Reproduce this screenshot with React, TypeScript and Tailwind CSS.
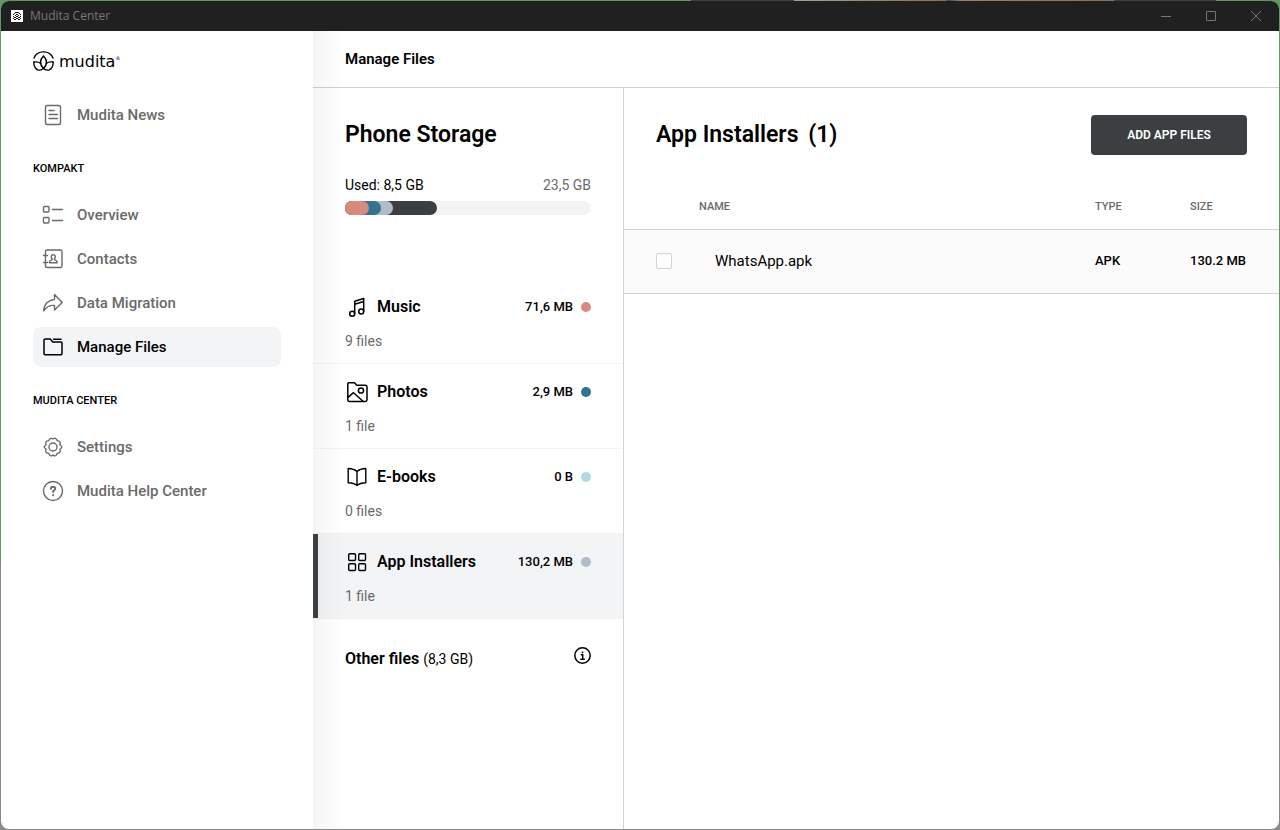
import type { ReactNode } from "react";

type IconProps = { children: ReactNode; className?: string; width?: number };

function Icon({ children, className = "", width = 1.4 }: IconProps) {
  return (
    <svg
      viewBox="0 0 24 24"
      fill="none"
      stroke="currentColor"
      strokeWidth={width}
      strokeLinecap="round"
      strokeLinejoin="round"
      aria-hidden="true"
      className={`size-6 shrink-0 ${className}`}
    >
      {children}
    </svg>
  );
}

const icons = {
  news: (
    <Icon>
      <rect x="4.5" y="2.5" width="15" height="19" rx="1.8" />
      <path d="M8 7.500h5M8 11.500h8.500M8 15.500h8.500" />
    </Icon>
  ),
  overview: (
    <Icon>
      <rect x="2.5" y="3.5" width="5.5" height="5.5" rx="1" />
      <rect x="2.5" y="14.5" width="5.5" height="5.5" rx="1" />
      <path d="M11.5 6.5h10M11.5 17.5h10" />
    </Icon>
  ),
  contacts: (
    <Icon>
      <rect x="4.5" y="3" width="16.5" height="17.5" rx="1.5" />
      <path d="M2.5 8.5h4M2.5 15.5h4" />
      <path d="M11.300 12c-1-.8-1.200-1.700-1-2.600.2-1 1-1.700 2-1.700s1.800.7 2 1.700c.2.900 0 1.800-1 2.600 0 1.400 3 .9 3 3.700h-8c0-2.800 3-2.300 3-3.700z" />
    </Icon>
  ),
  migration: (
    <Icon>
      <path d="M13.500 3.500l7.700 7.900-7.700 7.600v-4.600c-4.800-.3-8.300 1.400-10.700 5.600 0-6.500 4.200-11 10.700-11.400z" />
    </Icon>
  ),
  folder: (
    <Icon width={1.5}>
      <path d="M4.200 4h5l2.500 3h8.500a.8.8 0 0 1 .8.8v10.700a1.200 1.200 0 0 1-1.200 1.200H4.200a1.200 1.200 0 0 1-1.200-1.200V5.200A1.200 1.200 0 0 1 4.200 4z" />
      <path d="M12.500 4.200H20" />
    </Icon>
  ),
  settings: (
    <Icon>
      <circle cx="12" cy="12" r="4" />
      <path d="M9.600 3.300c1.200-.8 1.700.7 2.400.7s1.200-1.500 2.400-.7c1.500.5 1.200 2 1.900 2.400s2.200-.1 2.700 1.100c.8 1.300-.3 2-.1 2.800s1.900 1.200 1.900 2.400-1.700 1.600-1.900 2.400.9 1.500.1 2.800c-.5 1.200-2 .7-2.700 1.100s-.4 1.900-1.900 2.400c-1.200.8-1.700-.7-2.400-.7s-1.200 1.500-2.400.7c-1.500-.5-1.200-2-1.900-2.400s-2.200.1-2.700-1.100c-.8-1.300.3-2 .1-2.800s-1.900-1.200-1.900-2.400 1.700-1.600 1.900-2.400-.9-1.500-.1-2.800c.5-1.200 2-.7 2.700-1.100s.4-1.900 1.900-2.400z" />
    </Icon>
  ),
  help: (
    <Icon>
      <circle cx="12" cy="12" r="9.500" />
      <path strokeWidth="1.900" d="M9.900 9.800c.1-2.700 4.300-2.700 4.300 0 0 1.600-2.100 1.500-2.100 3.200M12.100 16v.2" />
    </Icon>
  ),
  music: (
    <Icon width={1.5}>
      <circle cx="7.200" cy="18.800" r="2.500" />
      <circle cx="16.200" cy="16.500" r="2.500" />
      <path d="M9.700 18.800V6.200l9-2.700v13M9.700 9.200l9-2.700" />
    </Icon>
  ),
  photos: (
    <Icon width={1.5}>
      <path d="M3.800 2.700h5.400c1.500 0 1.200 2.500 2.800 2.500h8.400a1.600 1.600 0 0 1 1.600 1.600v13a1.600 1.600 0 0 1-1.600 1.600H4.400a1.600 1.600 0 0 1-1.600-1.600V3.700a1 1 0 0 1 1-1z" />
      <circle cx="16" cy="10.500" r="2.600" />
      <path d="M3 17.300l5.500-4.600 9.500 8.500" />
    </Icon>
  ),
  books: (
    <Icon width={1.4}>
      <path d="M12 6.500v14M12 6.500c-2.300-2.200-5-2.900-8.800-3v14.300c3.700.1 6.500.7 8.800 2.700 2.300-2 5.100-2.600 8.800-2.700V3.500c-3.800.1-6.500.8-8.800 3z" />
    </Icon>
  ),
  apps: (
    <Icon width={1.4}>
      <rect x="3.700" y="3.700" width="6.800" height="6.800" rx="1" />
      <rect x="13.700" y="3.700" width="6.800" height="6.800" rx="1" />
      <rect x="3.700" y="13.700" width="6.800" height="6.800" rx="1" />
      <rect x="13.700" y="13.700" width="6.800" height="6.800" rx="1" />
    </Icon>
  ),
};

type NavItem = { label: string; icon: ReactNode; active?: boolean };

const newsItems: NavItem[] = [{ label: "Mudita News", icon: icons.news }];

const kompaktItems: NavItem[] = [
  { label: "Overview", icon: icons.overview },
  { label: "Contacts", icon: icons.contacts },
  { label: "Data Migration", icon: icons.migration },
  { label: "Manage Files", icon: icons.folder, active: true },
];

const centerItems: NavItem[] = [
  { label: "Settings", icon: icons.settings },
  { label: "Mudita Help Center", icon: icons.help },
];

const categories = [
  { label: "Music", icon: icons.music, size: "71,6 MB", count: "9 files", dot: "bg-[#d68b7e]" },
  { label: "Photos", icon: icons.photos, size: "2,9 MB", count: "1 file", dot: "bg-[#35728f]" },
  { label: "E-books", icon: icons.books, size: "0 B", count: "0 files", dot: "bg-[#b1dade]" },
  { label: "App Installers", icon: icons.apps, size: "130,2 MB", count: "1 file", dot: "bg-[#afbcc9]", active: true },
];

function NavList({ items }: { items: NavItem[] }) {
  return (
    <ul className="flex flex-col gap-1">
      {items.map((item) => (
        <li key={item.label}>
          <a
            href="#"
            className={`flex h-10 items-center gap-3 rounded-lg pl-2 text-[15px] font-medium ${
              item.active ? "bg-[#f3f4f6] text-black" : "text-[#6a6a6a]"
            }`}
          >
            {item.icon}
            {item.label}
          </a>
        </li>
      ))}
    </ul>
  );
}

function TitleBar() {
  return (
    <div className="flex h-[30px] shrink-0 items-center bg-[#202020] pl-2.5 text-[#777]">
      <svg viewBox="0 0 12 12" className="mr-[7px] size-3" aria-hidden="true">
        <path fill="#fff" d="M0 0h12v12H0z" />
        <path
          fill="#111"
          d="M4 2h4v1H4zM3 3h1v1H3zM8 3h1v1H8zM2 4h1v1H2zM5 4h2v1H5zM9 4h1v1H9zM4 5h1v1H4zM7 5h1v1H7zM2 6h1v1H2zM5 6h2v1H5zM9 6h1v1H9zM3 7h2v1H3zM7 7h2v1H7zM2 8h1v1H2zM5 8h2v1H5zM9 8h1v1H9zM3 9h2v1H3zM7 9h2v1H7z"
        />
      </svg>
      <span className="font-['Open_Sans',sans-serif] text-xs">Mudita Center</span>
      <div className="ml-auto flex pr-px">
        <button aria-label="Minimize" className="flex h-[30px] w-[45px] items-center justify-center">
          <svg viewBox="0 0 10 10" className="size-2.5" stroke="currentColor" fill="none">
            <path d="M0 5.500h10" />
          </svg>
        </button>
        <button aria-label="Maximize" className="flex h-[30px] w-[45px] items-center justify-center">
          <svg viewBox="0 0 10 10" className="size-2.5" stroke="currentColor" fill="none">
            <rect x=".5" y=".5" width="9" height="9" rx=".5" />
          </svg>
        </button>
        <button aria-label="Close" className="flex h-[30px] w-[45px] items-center justify-center">
          <svg viewBox="0 0 10 10" className="size-2.5" stroke="currentColor" fill="none">
            <path d="M0 0l10 10M10 0L0 10" />
          </svg>
        </button>
      </div>
    </div>
  );
}

function Logo() {
  return (
    <div className="flex h-5 items-center gap-[5px]">
      <svg
        viewBox="0 0 21 20"
        className="h-5 w-[21px]"
        fill="none"
        stroke="#000"
        strokeWidth="1.4"
        strokeLinecap="round"
        aria-hidden="true"
      >
        <path d="M1 7C4-1.200 17-1.200 20 7" />
        <path d="M10.500 5c-3.900 4-3.900 8.500 0 12.500 3.900-4 3.900-8.500 0-12.500z" />
        <path d="M7.700 12.500C6 11 3.500 10.600.8 11c0 4 1.500 6.700 3.900 7.800 2.400.7 4.400 0 5.800-1.500 1.400 1.500 3.400 2.200 5.800 1.500 2.400-1.100 3.900-3.800 3.900-7.800-2.700-.4-5.200 0-6.900 1.500" />
      </svg>
      <span className="flex pt-0.5 font-['DejaVu_Sans',sans-serif] text-base leading-5">
        mudita
        <span className="text-[5px] leading-3">®</span>
      </span>
    </div>
  );
}

function Sidebar() {
  return (
    <aside className="w-78 shrink-0 px-8 pt-5">
      <Logo />
      <nav className="pt-6">
        <NavList items={newsItems} />
        <h2 className="pt-[26px] pb-[18px] text-[11px] leading-4 font-medium">KOMPAKT</h2>
        <NavList items={kompaktItems} />
        <h2 className="pt-[26px] pb-[18px] text-[11px] leading-4 font-medium">MUDITA CENTER</h2>
        <NavList items={centerItems} />
      </nav>
    </aside>
  );
}

function Storage() {
  return (
    <section className="w-[311px] shrink-0 border-r border-[#d2d3d5]">
      <div className="px-8 pt-[27px]">
        <h2 className="text-[23px] leading-10 font-semibold">Phone Storage</h2>
        <div className="mt-5 flex justify-between text-sm leading-5">
          <span>Used: 8,5 GB</span>
          <span className="text-[#6a6a6a]">23,5 GB</span>
        </div>
        <div className="mt-1.5 flex h-3.5 rounded-full bg-[#f3f4f6]">
          <div className="flex w-[92px] rounded-full bg-[#3b3f42]">
            <div className="flex w-12 rounded-full bg-[#afbcc9]">
              <div className="flex w-9 rounded-full bg-[#35728f]">
                <div className="w-6 rounded-full bg-[#d68b7e]" />
              </div>
            </div>
          </div>
        </div>
      </div>

      <ul className="mt-16">
        {categories.map((category) => (
          <li key={category.label}>
            <button
              className={`relative block w-full border-b border-[#f3f4f6] px-8 pt-4 pb-3 text-left ${
                category.active ? "bg-[#f3f4f6]" : ""
              }`}
            >
              {category.active && <span className="absolute inset-y-0 left-0 z-20 w-[5px] bg-[#3b3f42]" />}
              <span className="flex h-6 items-center gap-2">
                {category.icon}
                <span className="text-base font-semibold">{category.label}</span>
                <span className="ml-auto text-[13px] font-medium">{category.size}</span>
                <span className={`size-2.5 rounded-full ${category.dot}`} />
              </span>
              <span className="mt-3 block text-sm leading-5 text-[#6a6a6a]">{category.count}</span>
            </button>
          </li>
        ))}
      </ul>

      <div className="flex items-start justify-between px-8 pt-7">
        <p className="text-base leading-6 font-semibold">
          Other files <span className="text-sm font-normal">(8,3 GB)</span>
        </p>
        <button aria-label="About other files">
          <svg viewBox="0 0 18 18" className="size-[18px]" fill="none" stroke="#000" strokeWidth="1.5">
            <circle cx="9.500" cy="8.500" r="7.700" />
            <path d="M7.700 7.700h2v4.300M7.300 12.200h4.600M9.500 4.500v1.700" />
          </svg>
        </button>
      </div>
    </section>
  );
}

function Files() {
  return (
    <section className="min-w-0 flex-1">
      <div className="flex items-center justify-between px-8 pt-[27px]">
        <h2 className="text-[23px] leading-10 font-semibold">
          App Installers <span className="ml-1">(1)</span>
        </h2>
        <button className="h-10 w-39 rounded bg-[#3b3f42] text-xs font-semibold text-white">ADD APP FILES</button>
      </div>

      <table className="mt-[26px] w-full table-fixed text-left">
        <thead>
          <tr className="h-12 border-b border-[#d2d3d5] text-[11px] text-[#6a6a6a]">
            <td className="w-[75px]" />
            <th className="pt-1 font-medium">NAME</th>
            <th className="w-[95px] pt-1 font-medium">TYPE</th>
            <th className="w-[89px] pt-1 font-medium">SIZE</th>
          </tr>
        </thead>
        <tbody>
          <tr className="h-16 border-b border-[#d2d3d5] bg-[#fbfbfb]">
            <td className="pl-8">
              <input
                type="checkbox"
                aria-label="Select WhatsApp.apk"
                className="block size-4 appearance-none rounded-xs border border-[#d2d3d5] bg-white"
              />
            </td>
            <td className="pl-4 text-[15px]">WhatsApp.apk</td>
            <td className="text-[13px] font-medium">APK</td>
            <td className="text-[13px] font-medium">130.2 MB</td>
          </tr>
        </tbody>
      </table>
    </section>
  );
}

export default function App() {
  return (
    <div className="relative flex min-h-screen bg-linear-to-b from-[#5a9c62] from-68% to-[#8a8a86] to-68% p-px font-[Roboto,sans-serif] text-black">
      {/* desktop showing above the window */}
      <div className="absolute inset-x-0 top-0 h-px bg-[linear-gradient(to_right,#5a9c62_54%,#3a4044_54%,#3a4044_62%,#a89e90_62%,#8a7058_74%,#3a4044_74%,#a08068_75%,#8a7058_87%,#3a4044_87%,#3a4044_95%,#5a9c62_95%)]" />
      <div className="flex flex-1 flex-col overflow-hidden rounded-lg bg-white">
        <TitleBar />
        <div className="flex flex-1">
          <Sidebar />
          <main className="relative flex min-w-0 flex-1 flex-col">
            <div className="pointer-events-none absolute inset-y-0 left-0 z-10 w-8 bg-linear-to-r from-black/4 to-transparent" />
            <header className="flex h-[57px] shrink-0 items-center border-b border-[#d2d3d5] px-8">
              <h1 className="text-[15px] font-semibold">Manage Files</h1>
            </header>
            <div className="flex flex-1">
              <Storage />
              <Files />
            </div>
          </main>
        </div>
      </div>
    </div>
  );
}
